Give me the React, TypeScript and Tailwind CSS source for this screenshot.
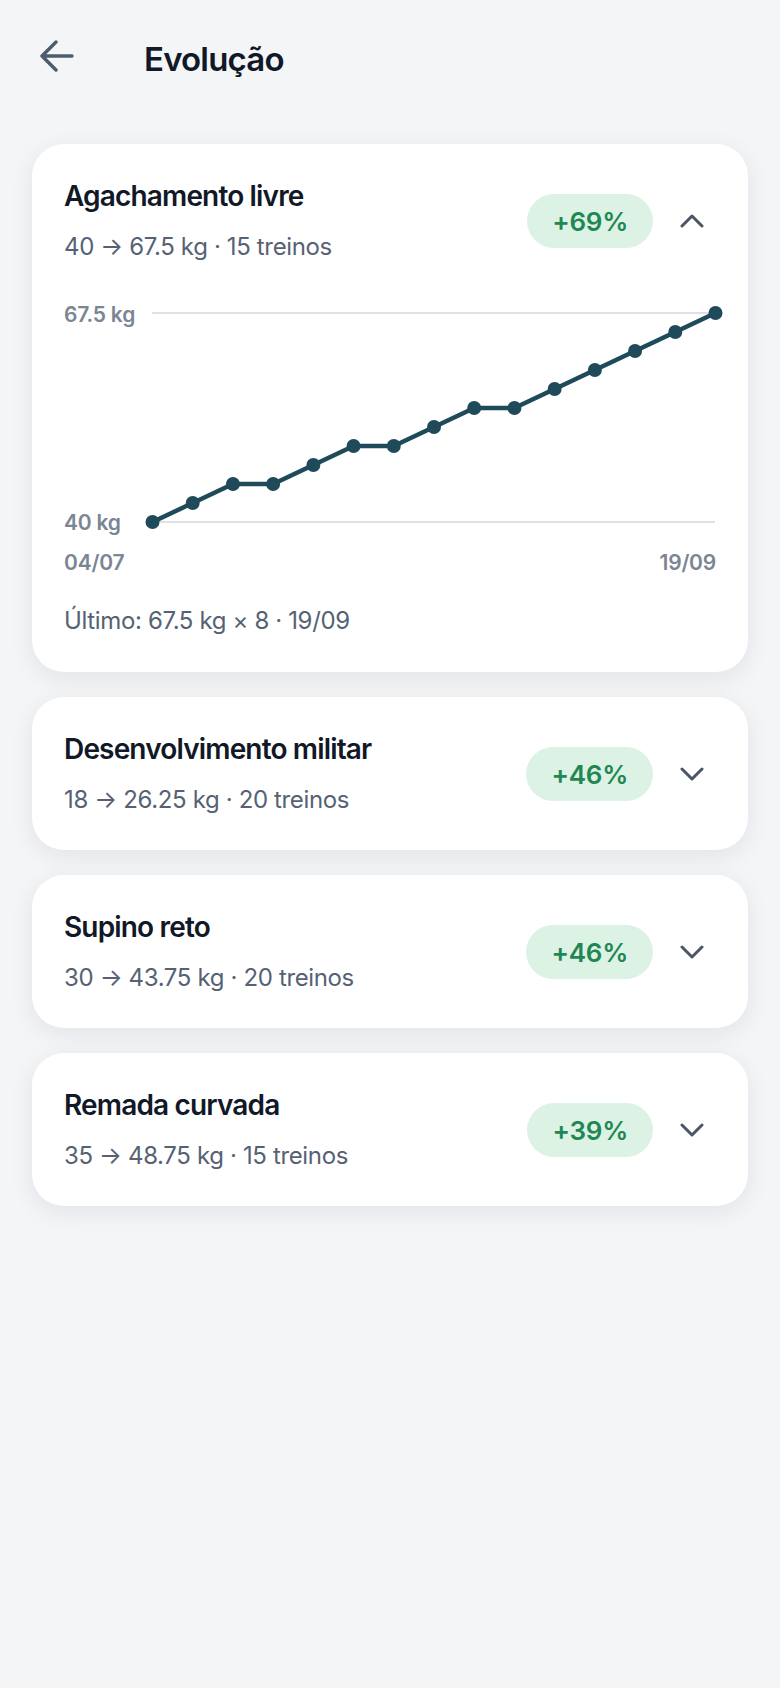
const font = { fontFamily: "Inter, 'Noto Sans', sans-serif" };

const exercises = [
  { name: "Agachamento livre", from: "40", to: "67.5", sessions: 15, gain: "+69%", open: true },
  { name: "Desenvolvimento militar", from: "18", to: "26.25", sessions: 20, gain: "+46%", open: false },
  { name: "Supino reto", from: "30", to: "43.75", sessions: 20, gain: "+46%", open: false },
  { name: "Remada curvada", from: "35", to: "48.75", sessions: 15, gain: "+39%", open: false },
];

const series = [40, 42.5, 45, 45, 47.5, 50, 50, 52.5, 55, 55, 57.5, 60, 62.5, 65, 67.5];

function Chevron({ up }: { up: boolean }) {
  return (
    <svg width="24" height="14" viewBox="0 0 24 14" fill="none" className="shrink-0">
      <path
        d={up ? "M2 12L12 2l10 10" : "M2 2l10 10 10-10"}
        stroke="#4b5563"
        strokeWidth="3"
        strokeLinecap="round"
        strokeLinejoin="round"
      />
    </svg>
  );
}

function Chart() {
  const w = 564;
  const top = 7;
  const span = 209;
  const pts = series.map((v, i) => ({
    x: 0.5 + (i * 563) / (series.length - 1),
    y: top + ((67.5 - v) / 27.5) * span,
  }));
  const d = pts.map((p, i) => `${i === 0 ? "M" : "L"}${p.x} ${p.y}`).join(" ");

  return (
    <div className="mt-[43px]">
      <div className="relative flex h-[223px]">
        <div className="w-[88px] shrink-0">
          <span className="absolute left-0 top-[9px] -translate-y-1/2 text-[21px] font-semibold tracking-[-0.01em] text-[#7b8694]">
            67.5 kg
          </span>
          <span className="absolute left-0 top-[217px] -translate-y-1/2 text-[21px] font-semibold tracking-[-0.01em] text-[#7b8694]">
            40 kg
          </span>
        </div>
        <svg width={w} height="223" viewBox={`0 0 ${w} 223`} className="overflow-visible">
          <line x1="0" y1={top} x2="563" y2={top} stroke="#dde1e6" strokeWidth="2" />
          <line x1="0" y1={top + span} x2="563" y2={top + span} stroke="#dde1e6" strokeWidth="2" />
          <path d={d} fill="none" stroke="#1f4a5a" strokeWidth="4.5" strokeLinejoin="round" strokeLinecap="round" />
          {pts.map((p, i) => (
            <circle key={i} cx={p.x} cy={p.y} r="7" fill="#1f4a5a" />
          ))}
        </svg>
      </div>
      <div className="mt-5 flex justify-between text-[21px] font-semibold leading-[28px] tracking-[-0.01em] text-[#7b8694]">
        <span>04/07</span>
        <span>19/09</span>
      </div>
      <p className="mt-7 text-[24px] leading-8 tracking-[-0.015em] text-[#566274]">Último: 67.5 kg × 8 · 19/09</p>
    </div>
  );
}

export default function App() {
  return (
    <div className="min-h-[1688px] bg-[#f4f5f7]" style={font}>
      <header className="flex h-[120px] items-center pl-10">
        <svg width="34" height="34" viewBox="0 0 34 34" fill="none" className="mb-2 shrink-0">
          <path
            d="M32 17H2M16 3L2 17l14 14"
            stroke="#4d5d6d"
            strokeWidth="3.4"
            strokeLinecap="round"
            strokeLinejoin="round"
          />
        </svg>
        <h1 className="ml-[70px] text-[33px] font-semibold tracking-tight text-[#111827]">Evolução</h1>
      </header>

      <main className="flex flex-col gap-[25px] px-8 pt-6">
        {exercises.map((ex) => (
          <section
            key={ex.name}
            className={`rounded-[32px] bg-white px-8 pt-[35px] shadow-[0_6px_24px_rgba(15,23,42,0.08)] ${
              ex.open ? "pb-[35px]" : "pb-[34px]"
            }`}
          >
            <div className="flex items-center justify-between">
              <div>
                <h2 className="text-[28px] font-semibold leading-[35px] tracking-[-0.03em] text-[#111827]">
                  {ex.name}
                </h2>
                <p className="mt-[17px] text-[24px] leading-8 tracking-[-0.015em] text-[#566274]">
                  {ex.from} → {ex.to} kg · {ex.sessions} treinos
                </p>
              </div>
              <div className="mr-3 flex items-center gap-[27px]">
                <span className="flex h-[54px] items-center rounded-full bg-[#dcf2e5] px-[25px] text-[26px] font-semibold tracking-[-0.01em] text-[#1f8753]">
                  {ex.gain}
                </span>
                <Chevron up={ex.open} />
              </div>
            </div>
            {ex.open && <Chart />}
          </section>
        ))}
      </main>
    </div>
  );
}
